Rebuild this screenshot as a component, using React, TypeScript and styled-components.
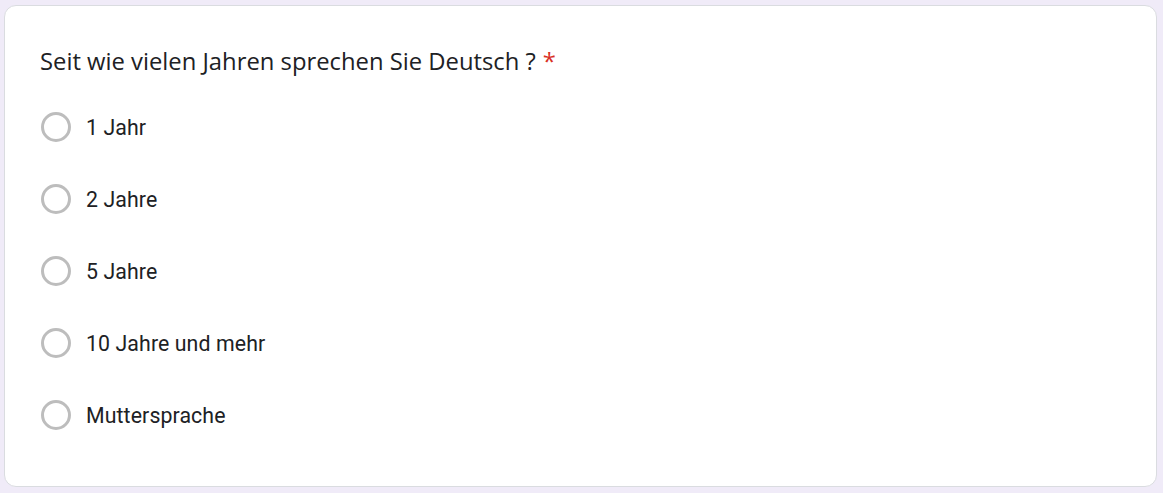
import React from "react";
import styled, { createGlobalStyle } from "styled-components";

const Global = createGlobalStyle`
  html, body { margin: 0; padding: 0; background: #f0ebf8; }
  body { font-family: Roboto, "Liberation Sans", sans-serif; }
`;

const Page = styled.div`
  padding: 5px 6px 6px 4px;
  width: 1163px;
  height: 493px;
  box-sizing: border-box;
`;

const Card = styled.div`
  background: #fff;
  border: 1px solid #dadce0;
  border-radius: 12px;
  box-sizing: border-box;
  height: 482px;
  padding: 35px;
  display: flex;
  flex-direction: column;
`;

const Title = styled.div`
  font-family: "Open Sans", Roboto, sans-serif;
  font-size: 23.8px;
  line-height: 40px;
  color: #202124;
  margin-bottom: 10px;
`;

const Star = styled.span`
  color: #d93025;
  margin-left: 7px;
`;

const Options = styled.div`
  display: flex;
  flex-direction: column;
`;

const Row = styled.label`
  display: flex;
  align-items: center;
  height: 72px;
  gap: 15px;
  cursor: pointer;
`;

const Radio = styled.span`
  width: 30px;
  height: 30px;
  box-sizing: border-box;
  border: 3px solid #bdbdbd;
  border-radius: 50%;
  flex: none;
  margin-left: 1px;
`;

const OptionText = styled.span`
  font-family: Roboto, sans-serif;
  font-size: 21.3px;
  color: #202124;
  letter-spacing: 0.1px;
`;

const options = ["1 Jahr", "2 Jahre", "5 Jahre", "10 Jahre und mehr", "Muttersprache"];

export default function App() {
  return (
    <>
      <Global />
      <Page>
        <Card>
          <Title>
            Seit wie vielen Jahren sprechen Sie Deutsch ?<Star>*</Star>
          </Title>
          <Options>
            {options.map((o) => (
              <Row key={o}>
                <Radio />
                <OptionText>{o}</OptionText>
              </Row>
            ))}
          </Options>
        </Card>
      </Page>
    </>
  );
}
